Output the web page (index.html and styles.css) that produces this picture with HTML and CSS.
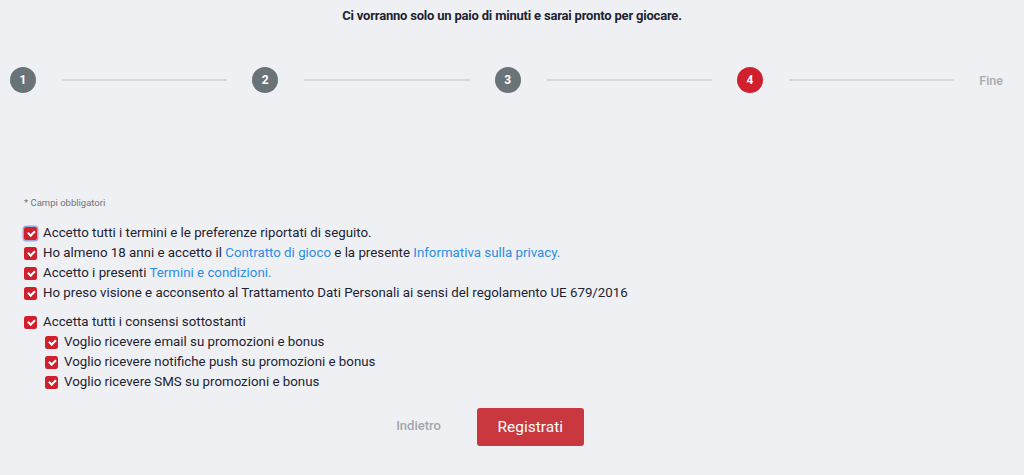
FILE: index.html
```html
<!DOCTYPE html>
<html lang="it">
<head>
    <meta charset="UTF-8">
    <meta name="viewport" content="width=device-width, initial-scale=1.0">
    <title>Registrazione</title>
    <link rel="stylesheet" href="styles.css">
</head>
<body>
    <p class="intro">Ci vorranno solo un paio di minuti e sarai pronto per giocare.</p>

    <div class="stepper">
        <span class="step">1</span><span class="step-line"></span>
        <span class="step">2</span><span class="step-line"></span>
        <span class="step">3</span><span class="step-line"></span>
        <span class="step active">4</span><span class="step-line"></span>
        <span class="step-end">Fine</span>
    </div>

    <div class="consents">
        <p class="required">* Campi obbligatori</p>

        <label class="check focused"><span class="box"></span>Accetto tutti i termini e le preferenze riportati di seguito.</label>
        <label class="check"><span class="box"></span><span>Ho almeno 18 anni e accetto il <a href="#">Contratto di gioco</a> e la presente <a href="#">Informativa sulla privacy.</a></span></label>
        <label class="check"><span class="box"></span><span>Accetto i presenti <a href="#">Termini e condizioni.</a></span></label>
        <label class="check"><span class="box"></span>Ho preso visione e acconsento al Trattamento Dati Personali ai sensi del regolamento UE 679/2016</label>

        <div class="group">
            <label class="check"><span class="box"></span>Accetta tutti i consensi sottostanti</label>
            <div class="sub">
                <label class="check"><span class="box"></span>Voglio ricevere email su promozioni e bonus</label>
                <label class="check"><span class="box"></span>Voglio ricevere notifiche push su promozioni e bonus</label>
                <label class="check"><span class="box"></span>Voglio ricevere SMS su promozioni e bonus</label>
            </div>
        </div>
    </div>

    <div class="actions">
        <a href="#" class="back">Indietro</a>
        <button class="submit">Registrati</button>
    </div>
</body>
</html>
```

FILE: styles.css
```css
body { font-family: Roboto, "Liberation Sans", sans-serif; margin: 0; padding: 0; background-color: #eff0f4; color: #1d2331; }
.intro { margin: 0; padding-top: 8px; text-align: center; font-size: 13px; font-weight: 700; color: #1d2331; line-height: 16px; letter-spacing: -0.2px; }

.stepper { display: flex; align-items: center; padding: 0 21px 0 10px; margin-top: 43px; }
.step { width: 26px; height: 26px; border-radius: 50%; background-color: #6a7377; color: #fff; font-size: 12px; font-weight: 700; display: flex; align-items: center; justify-content: center; flex-shrink: 0; }
.step.active { background-color: #d0202d; }
.step-line { flex: 1; height: 2px; background-color: #d6d8dc; margin: 0 25px 0 26px; }
.step-end { font-size: 12.5px; font-weight: 500; color: #a9abb0; }

.consents { padding: 0 24px; margin-top: 104px; }
.required { margin: 0 0 15px; font-size: 9.5px; color: #6f737a; }
.check { display: flex; align-items: center; font-size: 13.3px; line-height: 20px; color: #1d2331; }
.check a { color: #2a8de4; text-decoration: none; }
.box { width: 13px; height: 13px; border-radius: 2.5px; background-color: #d0202d; margin-right: 6px; flex-shrink: 0; position: relative; }
.box::after { content: ""; position: absolute; left: 4.5px; top: 2.5px; width: 2.5px; height: 5px; border: solid #fff; border-width: 0 2px 2px 0; transform: rotate(45deg); }
.focused .box { box-shadow: 0 0 0 1.5px #9ea8dc; }
.group { margin-top: 9px; }
.sub { padding-left: 21px; }

.actions { display: flex; justify-content: center; align-items: center; gap: 36px; margin-top: 16px; padding-right: 44px; }
.back { color: #a3a6ab; font-size: 13px; font-weight: 500; text-decoration: none; margin-top: -4px; }
.submit { width: 107px; height: 38px; border: none; border-radius: 3px; background-color: #c9383e; color: #fff; font-family: Roboto, sans-serif; font-size: 15.5px; cursor: pointer; }
```
